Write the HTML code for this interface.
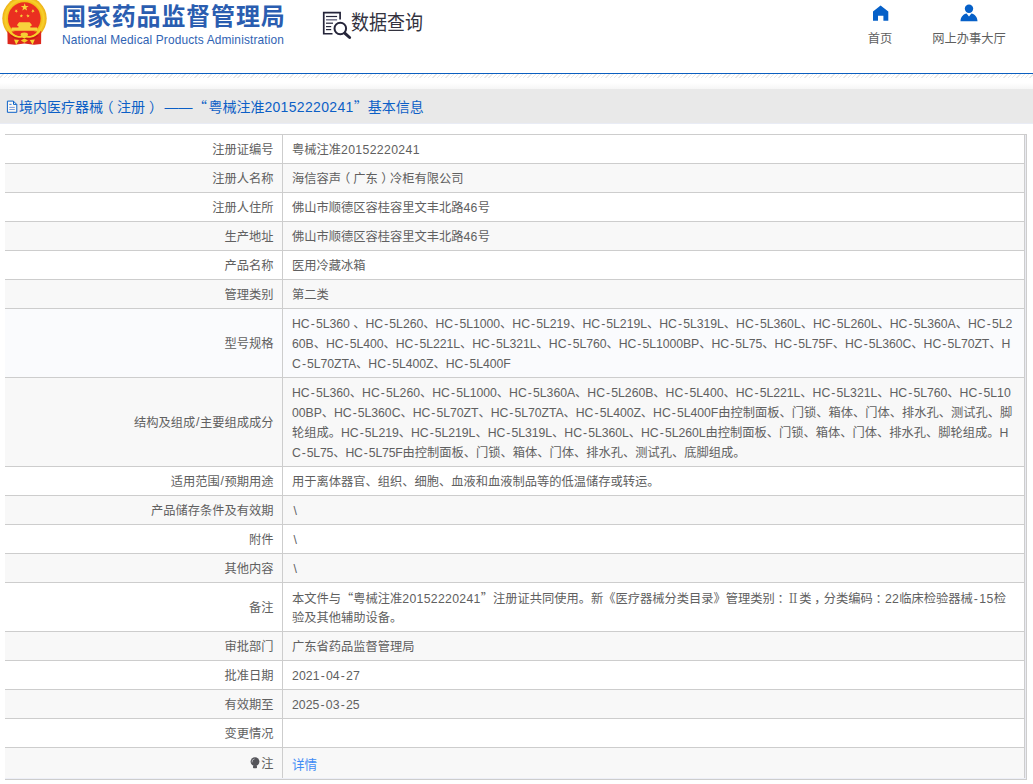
<!DOCTYPE html>
<html lang="zh-CN">
<head>
<meta charset="utf-8">
<title>国家药品监督管理局 数据查询</title>
<style>
html,body{margin:0;padding:0;}
body{width:1033px;height:784px;overflow:hidden;background:#fff;position:relative;
  font-family:"Liberation Sans","Noto Sans CJK SC",sans-serif;font-size:12.25px;color:#606060;}
.abs{position:absolute;}
b{font-weight:normal;letter-spacing:var(--s,0.3px);}
i{font-style:normal;}
q{quotes:none;font-family:"Noto Sans CJK SC",sans-serif;}
q:before,q:after{content:none;}
a{color:#3f8cf5;font-size:12.6px;position:relative;top:1.2px;}
#emblem{left:0;top:0;width:60px;height:50px;}
#logo-cn{left:62px;top:-3px;font-family:"Noto Sans CJK SC","Liberation Sans",sans-serif;font-weight:bold;letter-spacing:0.85px;font-size:24px;line-height:36px;color:#2a5db0;white-space:nowrap;}
#logo-en{left:62px;top:32.6px;letter-spacing:0.15px;font-family:"Liberation Sans",sans-serif;font-size:11.9px;line-height:14px;color:#2f63b3;white-space:nowrap;}
#dq-icon{left:318px;top:8px;width:36px;height:34px;}
#dq-text{left:351px;top:5.4px;font-family:"Noto Sans CJK SC","Liberation Sans",sans-serif;font-size:20.4px;line-height:32px;color:#33333f;white-space:nowrap;transform:scaleX(0.882);transform-origin:0 0;}
.nav{top:30px;height:16px;line-height:16px;font-size:12.25px;color:#5f5f5f;text-align:center;white-space:nowrap;font-family:"Noto Sans CJK SC","Liberation Sans",sans-serif;}
#blue-line{left:0;top:73px;width:1033px;height:1px;background:#0b5fc0;}
#hatch{left:0;top:74px;width:1033px;height:4px;background:repeating-linear-gradient(135deg,#fff 0,#fff 2.1px,#e8e8e8 2.1px,#e8e8e8 3.06px);}
#fade{left:0;top:83px;width:1033px;height:6px;background:linear-gradient(#fff,#f6f6f6);}
#bar{left:0;top:89px;width:1033px;height:34px;background:#e9e9e9;border-bottom:1px solid #e9ecf5;}
#title{left:19px;top:96px;height:21px;line-height:21px;font-size:14px;color:#0c5fc6;white-space:nowrap;--s:0.33px;}
#title .dash{margin-left:5.5px;margin-right:1.9px;}
#title q.o{position:relative;left:-1.5px;}
#title-icon{left:5px;top:98px;width:16px;height:18px;}
#tb{left:5px;top:134px;width:1022px;height:646px;}
#tb .top{position:absolute;left:0;top:0;width:1022px;height:1px;background:#cdcdcd;}
.row{position:absolute;left:0;width:1020px;border-bottom:1px solid #cdcdcd;border-right:1px solid #cdcdcd;box-sizing:border-box;}
.row.g{background:#f8f8f8;}
.row.last{border-bottom:none;}
.row .l{position:absolute;left:0;top:0;bottom:0;width:278px;border-right:1px solid #cdcdcd;box-sizing:border-box;text-align:right;padding-right:8.5px;display:flex;align-items:center;justify-content:flex-end;white-space:nowrap;}
.row.last .l{bottom:0;}
.row .v{position:absolute;left:278px;top:0;right:0;bottom:0;padding:5px 0 3px 9px;line-height:20px;white-space:nowrap;}
.row.last .v{padding-top:6px;}
.row .v div{height:20px;white-space:nowrap;}
.bulb{margin-right:1.7px;position:relative;top:0.3px;}
#tb .gapr{position:absolute;left:1020px;top:1px;width:1px;height:644px;background:#e9eaf1;}
#tb .gapb{position:absolute;left:0;top:644px;width:1021px;height:1px;background:#edeff7;}
#tb .br{position:absolute;left:1021px;top:0;width:1px;height:646px;background:#cdcdcd;}
#tb .bb{position:absolute;left:0;top:645px;width:1022px;height:1px;background:#cdcdcd;}
u{text-decoration:none;margin:0 1.1px;}
i.po{position:relative;left:-3px;}
i.pc{position:relative;left:3.5px;}
#title i.po{left:-3.5px;}
#title i.pc{left:4px;}
.l b{letter-spacing:0;margin:0 0.65px;}
.bs{padding-left:1.5px;}
.row.hv{background:#fafbfd;}
i.cc{position:relative;left:2.8px;}
i.rn{font-family:"Noto Serif CJK SC","Noto Sans CJK SC",serif;}

</style>
</head>
<body>
<svg id="emblem" class="abs" viewBox="0 0 60 50" width="60" height="50">
<defs><radialGradient id="gd" cx="0.5" cy="0.5" r="0.5"><stop offset="0.72" stop-color="#f0b510"/><stop offset="0.86" stop-color="#f8d02c"/><stop offset="1" stop-color="#ecae14"/></radialGradient></defs>
<circle cx="24.5" cy="18.6" r="22.2" fill="url(#gd)"/>
<circle cx="24.3" cy="18.6" r="16.3" fill="#ea2f20"/>
<polygon points="24.70,3.20 25.66,5.97 28.60,6.03 26.26,7.81 27.11,10.62 24.70,8.94 22.29,10.62 23.14,7.81 20.80,6.03 23.74,5.97" fill="#f9d43a"/><polygon points="17.25,9.35 16.99,10.69 18.16,11.40 16.81,11.56 16.50,12.89 15.92,11.66 14.56,11.77 15.56,10.84 15.03,9.59 16.22,10.24" fill="#f9d43a"/><polygon points="31.95,9.35 32.98,10.24 34.17,9.59 33.64,10.84 34.64,11.77 33.28,11.66 32.70,12.89 32.39,11.56 31.04,11.40 32.21,10.69" fill="#f9d43a"/><polygon points="21.73,14.03 21.95,15.37 23.28,15.64 22.07,16.26 22.23,17.61 21.27,16.65 20.03,17.22 20.65,16.01 19.72,15.01 21.07,15.22" fill="#f9d43a"/><polygon points="27.67,14.03 28.33,15.22 29.68,15.01 28.75,16.01 29.37,17.22 28.13,16.65 27.17,17.61 27.33,16.26 26.12,15.64 27.45,15.37" fill="#f9d43a"/>
<path d="M19.1 22.3 H29.6 L31.6 24.4 V25.9 H30.4 V27.6 H37 L37.4 28.4 V30.8 H11.5 V28.4 L11.9 27.6 H18.4 V25.9 H17.3 V24.4 Z" fill="#f8d23c"/>
<path d="M7.4 31 L8.6 31 Q14.5 37.8 20.6 36.9 Q23.1 36.5 24.3 37.7 Q25.5 36.5 28 36.9 Q34 37.8 40 31 L41.2 31 L41.1 44 L34 44.7 L24.3 43.6 L15 44.7 L7.6 44 Z" fill="#dc261c"/>
<path d="M11.6 31.4 H37.2 C34.5 35.4 29 37.2 24.3 35.6 C19.6 37.2 14.2 35.4 11.6 31.4 Z" fill="#e62b1e"/>
<path d="M8.6 31 Q14.5 37.8 20.6 36.9 Q23.1 36.5 24.3 37.7 Q25.5 36.5 28 36.9 Q34 37.8 40 31" fill="none" stroke="#f6d12a" stroke-width="1.6"/>
<path d="M10.5 35.3 Q16 39.6 21 38.6 Q23.3 38.2 24.3 39.2 Q25.3 38.2 27.6 38.6 Q32.6 39.6 38.2 35.3" fill="none" stroke="#c51a13" stroke-width="1.1"/>
<ellipse cx="24.3" cy="34.6" rx="3.7" ry="2.2" fill="#f5cf35"/>
<path d="M14 39.4 L19 39.9 L16.2 44.7 Z M29.8 39.9 L34.8 39.4 L32.6 44.7 Z" fill="#f6d535"/>
<path d="M20.8 40.5 L24.4 38.4 L28 40.5 L24.4 42.8 Z" fill="#f4c829"/>
</svg>
<div id="logo-cn" class="abs">国家药品监督管理局</div>
<div id="logo-en" class="abs">National Medical Products Administration</div>
<svg id="dq-icon" class="abs" viewBox="0 0 36 34" width="36" height="34">
<g fill="none" stroke="#25253a" stroke-linecap="butt">
<path d="M22.1 11.6 V4.65 H5.75 V25.75 H14.5" stroke-width="1.7"/>
<path d="M8 8.5 H19.1" stroke-width="1.2"/>
<path d="M8 11.8 H19.1" stroke-width="1.5" stroke="#74748a"/>
<path d="M8 15.2 H15" stroke-width="1.2"/>
<path d="M8 18.6 H13.2" stroke-width="1.2"/>
<path d="M8 21.6 H13.2" stroke-width="1.2"/>
<circle cx="22.3" cy="20.5" r="5.8" stroke-width="2" fill="#fff"/>
<path d="M27 25.3 L31.6 29.5" stroke-width="3" stroke-linecap="round"/>
</g></svg>
<div id="dq-text" class="abs">数据查询</div>
<svg id="home-icon" class="abs" style="left:870px;top:3px" width="22" height="20" viewBox="0 0 22 20"><path d="M3 8.5 L10.6 2.4 L18.3 8.5 V17.7 H13.4 V12.8 H8 V17.7 H3 Z" fill="#0660c8"/></svg>
<div class="abs nav" style="left:860px;width:40px">首页</div>
<svg id="user-icon" class="abs" style="left:958px;top:3px" width="22" height="20" viewBox="0 0 22 20"><circle cx="11" cy="5.7" r="4.2" fill="#0660c8"/><path d="M2.5 18.3 C2.5 14 5.5 11 8.6 10.5 L11 13.6 L13.4 10.5 C16.5 11 19.5 14 19.5 18.3 Z" fill="#0660c8"/></svg>
<div class="abs nav" style="left:929px;width:80px">网上办事大厅</div>
<div id="blue-line" class="abs"></div>
<div id="hatch" class="abs"></div>
<div id="fade" class="abs"></div>
<div id="bar" class="abs"></div>
<svg id="title-icon" class="abs" viewBox="0 0 16 18" width="16" height="18">
<path d="M2.4 3.1 H8.4 L11.8 6.5 V14.3 H2.4 Z" fill="#fbf8f3" stroke="#0c62c8" stroke-width="1" stroke-linejoin="round"/>
<path d="M8.5 3.2 V6.4 H11.7" fill="none" stroke="#0c62c8" stroke-width="1"/>
<path d="M4.3 6.4 H6.6" fill="none" stroke="#2f6fd0" stroke-width="0.9"/>
<path d="M4.3 9.4 H9.8 M4.3 11.5 H9.8" fill="none" stroke="#5c86d6" stroke-width="0.8"/>
</svg>
<div id="title" class="abs">境内医疗器械<i class=po>（</i>注册<i class=pc>）</i><span class="dash">——</span><q class="o">“</q>粤械注准<b>20152220241</b><q>”</q>基本信息</div>

<div id="tb" class="abs"><div class="top"></div>
<div class="row" style="top:1px;height:29px"><div class="l">注册证编号</div><div class="v"><div id="L0" style="--s:0.35px">粤械注准<b>20152220241</b></div></div></div>
<div class="row g" style="top:30px;height:29px"><div class="l">注册人名称</div><div class="v"><div id="L1">海信容声<i class=po>（</i>广东<i class=pc>）</i>冷柜有限公司</div></div></div>
<div class="row" style="top:59px;height:29px"><div class="l">注册人住所</div><div class="v"><div id="L2" style="--s:0.3px">佛山市顺德区容桂容里文丰北路<b>46</b>号</div></div></div>
<div class="row g" style="top:88px;height:29px"><div class="l">生产地址</div><div class="v"><div id="L3" style="--s:0.3px">佛山市顺德区容桂容里文丰北路<b>46</b>号</div></div></div>
<div class="row" style="top:117px;height:29px"><div class="l">产品名称</div><div class="v"><div id="L4">医用冷藏冰箱</div></div></div>
<div class="row g" style="top:146px;height:29px"><div class="l">管理类别</div><div class="v"><div id="L5">第二类</div></div></div>
<div class="row hv" style="top:175px;height:69px"><div class="l">型号规格</div><div class="v"><div id="L6" style="--s:-0.03px"><b>HC<u>-</u>5L360 </b>、<b>HC<u>-</u>5L260</b>、<b>HC<u>-</u>5L1000</b>、<b>HC<u>-</u>5L219</b>、<b>HC<u>-</u>5L219L</b>、<b>HC<u>-</u>5L319L</b>、<b>HC<u>-</u>5L360L</b>、<b>HC<u>-</u>5L260L</b>、<b>HC<u>-</u>5L360A</b>、<b>HC<u>-</u>5L2</b></div><div id="L7" style="--s:-0.06px"><b>60B</b>、<b>HC<u>-</u>5L400</b>、<b>HC<u>-</u>5L221L</b>、<b>HC<u>-</u>5L321L</b>、<b>HC<u>-</u>5L760</b>、<b>HC<u>-</u>5L1000BP</b>、<b>HC<u>-</u>5L75</b>、<b>HC<u>-</u>5L75F</b>、<b>HC<u>-</u>5L360C</b>、<b>HC<u>-</u>5L70ZT</b>、<b>H</b></div><div id="L8" style="--s:-0.055px"><b>C<u>-</u>5L70ZTA</b>、<b>HC<u>-</u>5L400Z</b>、<b>HC<u>-</u>5L400F</b></div></div></div>
<div class="row g" style="top:244px;height:89px"><div class="l">结构及组成<b>/</b>主要组成成分</div><div class="v"><div id="L9" style="--s:-0.025px"><b>HC<u>-</u>5L360</b>、<b>HC<u>-</u>5L260</b>、<b>HC<u>-</u>5L1000</b>、<b>HC<u>-</u>5L360A</b>、<b>HC<u>-</u>5L260B</b>、<b>HC<u>-</u>5L400</b>、<b>HC<u>-</u>5L221L</b>、<b>HC<u>-</u>5L321L</b>、<b>HC<u>-</u>5L760</b>、<b>HC<u>-</u>5L10</b></div><div id="L10" style="--s:-0.053px"><b>00BP</b>、<b>HC<u>-</u>5L360C</b>、<b>HC<u>-</u>5L70ZT</b>、<b>HC<u>-</u>5L70ZTA</b>、<b>HC<u>-</u>5L400Z</b>、<b>HC<u>-</u>5L400F</b>由控制面板、门锁、箱体、门体、排水孔、测试孔、脚</div><div id="L11" style="--s:-0.045px">轮组成。<b>HC<u>-</u>5L219</b>、<b>HC<u>-</u>5L219L</b>、<b>HC<u>-</u>5L319L</b>、<b>HC<u>-</u>5L360L</b>、<b>HC<u>-</u>5L260L</b>由控制面板、门锁、箱体、门体、排水孔、脚轮组成。<b>H</b></div><div id="L12" style="--s:-0.2px"><b>C<u>-</u>5L75</b>、<b>HC<u>-</u>5L75F</b>由控制面板、门锁、箱体、门体、排水孔、测试孔、底脚组成。</div></div></div>
<div class="row" style="top:333px;height:29px"><div class="l">适用范围<b>/</b>预期用途</div><div class="v"><div id="L13">用于离体器官、组织、细胞、血液和血液制品等的低温储存或转运。</div></div></div>
<div class="row g" style="top:362px;height:29px"><div class="l">产品储存条件及有效期</div><div class="v"><div id="L14"><span class=bs><b>\</b></span></div></div></div>
<div class="row" style="top:391px;height:29px"><div class="l">附件</div><div class="v"><div id="L15"><span class=bs><b>\</b></span></div></div></div>
<div class="row g" style="top:420px;height:29px"><div class="l">其他内容</div><div class="v"><div id="L16"><span class=bs><b>\</b></span></div></div></div>
<div class="row" style="top:449px;height:49px"><div class="l">备注</div><div class="v"><div id="L17" style="--s:0.32px">本文件与<q>“</q>粤械注准<b>20152220241</b><q>”</q>注册证共同使用。新《医疗器械分类目录》管理类别<i class=cc>：</i><i class=rn>Ⅱ</i>类<i class=cc>，</i>分类编码<i class=cc>：</i><b>22</b>临床检验器械<b><u>-</u>15</b>检</div><div id="L18">验及其他辅助设备。</div></div></div>
<div class="row g" style="top:498px;height:29px"><div class="l">审批部门</div><div class="v"><div id="L19">广东省药品监督管理局</div></div></div>
<div class="row" style="top:527px;height:29px"><div class="l">批准日期</div><div class="v"><div id="L20" style="--s:0.08px"><b>2021<u>-</u>04<u>-</u>27</b></div></div></div>
<div class="row g" style="top:556px;height:29px"><div class="l">有效期至</div><div class="v"><div id="L21" style="--s:0.06px"><b>2025<u>-</u>03<u>-</u>25</b></div></div></div>
<div class="row" style="top:585px;height:29px"><div class="l">变更情况</div><div class="v"><div id="L22"></div></div></div>
<div class="row g last" style="top:614px;height:30px"><div class="l"><svg class="bulb" width="10" height="12" viewBox="0 0 10 12"><circle cx="5" cy="4.6" r="4.4" fill="#55555a"/><rect x="3" y="8.6" width="4" height="2.6" rx="0.8" fill="#55555a"/><path d="M2.1 5.4 A3 3 0 0 1 4.6 1.9" fill="none" stroke="#b9b9bf" stroke-width="0.9"/></svg><span>注</span></div><div class="v"><div id="L23"><a>详情</a></div></div></div>
<div class="gapr"></div><div class="gapb"></div><div class="br"></div><div class="bb"></div></div>
</body>
</html>
